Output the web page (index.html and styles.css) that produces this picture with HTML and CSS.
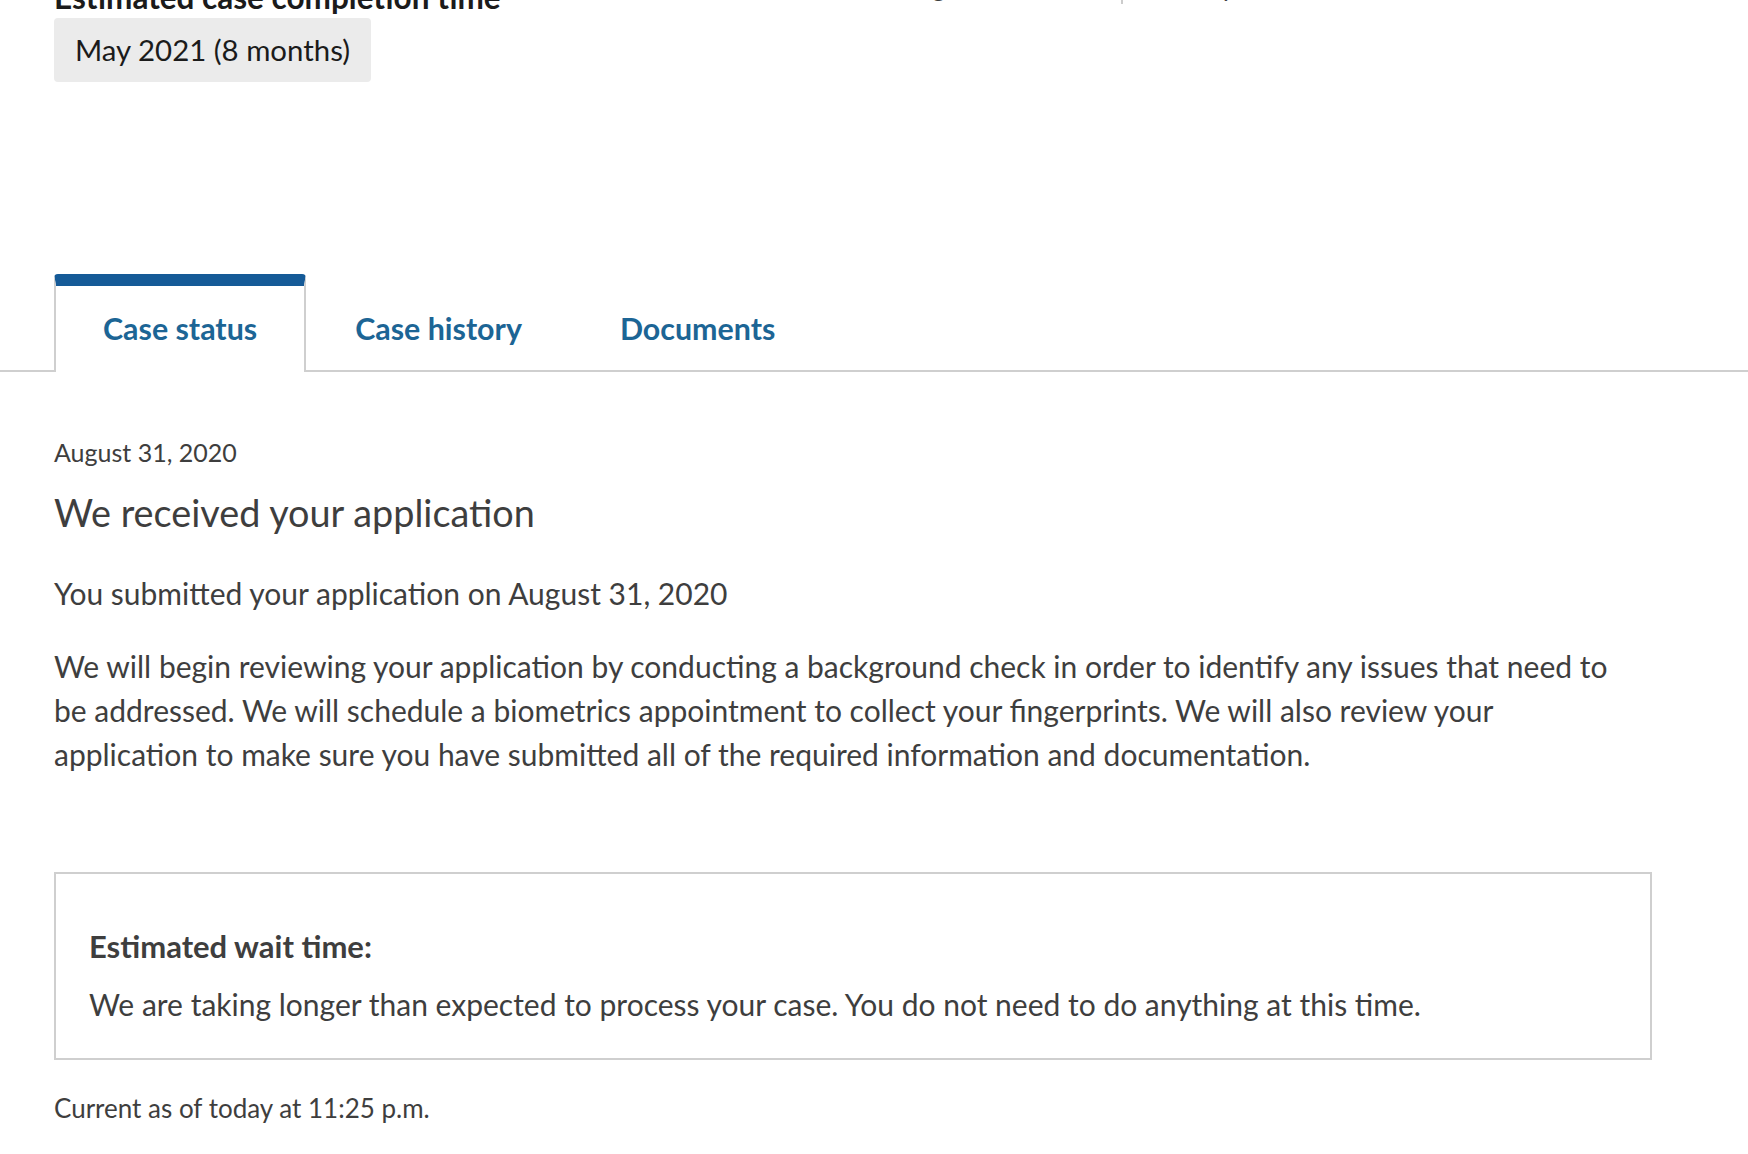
FILE: index.html
```html
<!DOCTYPE html>
<html lang="en">
<head>
<meta charset="UTF-8">
<title>Case status</title>
<link rel="stylesheet" href="styles.css">
</head>
<body>
<main class="page">

<section class="summary">
  <div class="summary-main">
    <h2 class="summary-title">Estimated case completion time</h2>
    <div class="estimate">May 2021 (8 months)</div>
  </div>
  <div class="summary-meta">Received August 31, 2020<span class="sep"></span>Priority date</div>
</section>

<nav class="tabs">
  <a href="#" class="tab active">Case status</a>
  <a href="#" class="tab">Case history</a>
  <a href="#" class="tab">Documents</a>
</nav>

<section class="status">
  <p class="status-date">August 31, 2020</p>
  <h3 class="status-title">We received your application</h3>
  <p class="status-text">You submitted your application on August 31, 2020</p>
  <p class="status-text">We will begin reviewing your application by conducting a background check in order to identify any issues that need to be addressed. We will schedule a biometrics appointment to collect your fingerprints. We will also review your application to make sure you have submitted all of the required information and documentation.</p>

  <div class="wait-box">
    <h4 class="wait-title">Estimated wait time:</h4>
    <p class="wait-text">We are taking longer than expected to process your case. You do not need to do anything at this time.</p>
  </div>

  <p class="updated">Current as of today at 11:25 p.m.</p>
</section>

</main>
</body>
</html>
```

FILE: styles.css
```css
body {
  margin: 0;
  background: #fff;
  font-family: Lato, "Liberation Sans", sans-serif;
  color: #3e3e3e;
  font-size: 30px;
  line-height: 44px;
}

.page {
  overflow: hidden;
}

.summary {
  display: flex;
  margin-top: -20px;
  padding-left: 54px;
}

.summary-main {
  width: 738px;
}

.summary-title {
  margin: 0 0 3px 0;
  font-size: 31.5px;
  line-height: 35px;
  font-weight: 700;
  color: #1b1b1b;
}

.estimate {
  display: inline-block;
  background: #ebebeb;
  border-radius: 4px;
  padding: 10px 21px;
  font-size: 29.4px;
  color: #1b1b1b;
}

.summary-meta {
  font-size: 26px;
  line-height: 35px;
  margin-top: -11px;
  color: #3e3e3e;
}

.summary-meta .sep {
  display: inline-block;
  width: 2px;
  height: 34px;
  background: #ccc;
  margin: 0 28px 0 30px;
  vertical-align: -8px;
}

/* tabs */
.tabs {
  display: flex;
  margin-top: 192px;
  padding-left: 54px;
  border-bottom: 2px solid #cfcfcf;
}

.tab {
  display: block;
  padding: 20px 47px 22px 47px;
  margin-bottom: -2px;
  border: 2px solid transparent;
  border-top: 12px solid transparent;
  border-bottom: 0;
  font-size: 30.4px;
  font-weight: 700;
  color: #1c6595;
  text-decoration: none;
}

.tab.active {
  background: #fff;
  border-color: #cfcfcf;
  border-top-color: #155a97;
  border-radius: 4px 4px 0 0;
}

/* case status */
.status {
  padding: 0 54px;
  max-width: 1598px;
}

.status-date {
  margin: 61px 0 0 0;
  font-size: 25px;
  line-height: 38px;
}

.status-title {
  margin: 17px 0 0 0;
  font-size: 37.8px;
  line-height: 49px;
  font-weight: 400;
}

.status-text {
  margin: 34px 0 0 0;
  max-width: 1580px;
}

.status-text + .status-text {
  margin-top: 29px;
}

.wait-box {
  margin-top: 96px;
  border: 2px solid #cfcfcf;
  padding: 50px 33px 32px 33px;
}

.wait-title {
  margin: 0;
  font-size: 31px;
  font-weight: 700;
}

.wait-text {
  margin: 14px 0 0 0;
}

.updated {
  margin: 29px 0 0 0;
  font-size: 26px;
  line-height: 38px;
}
```
